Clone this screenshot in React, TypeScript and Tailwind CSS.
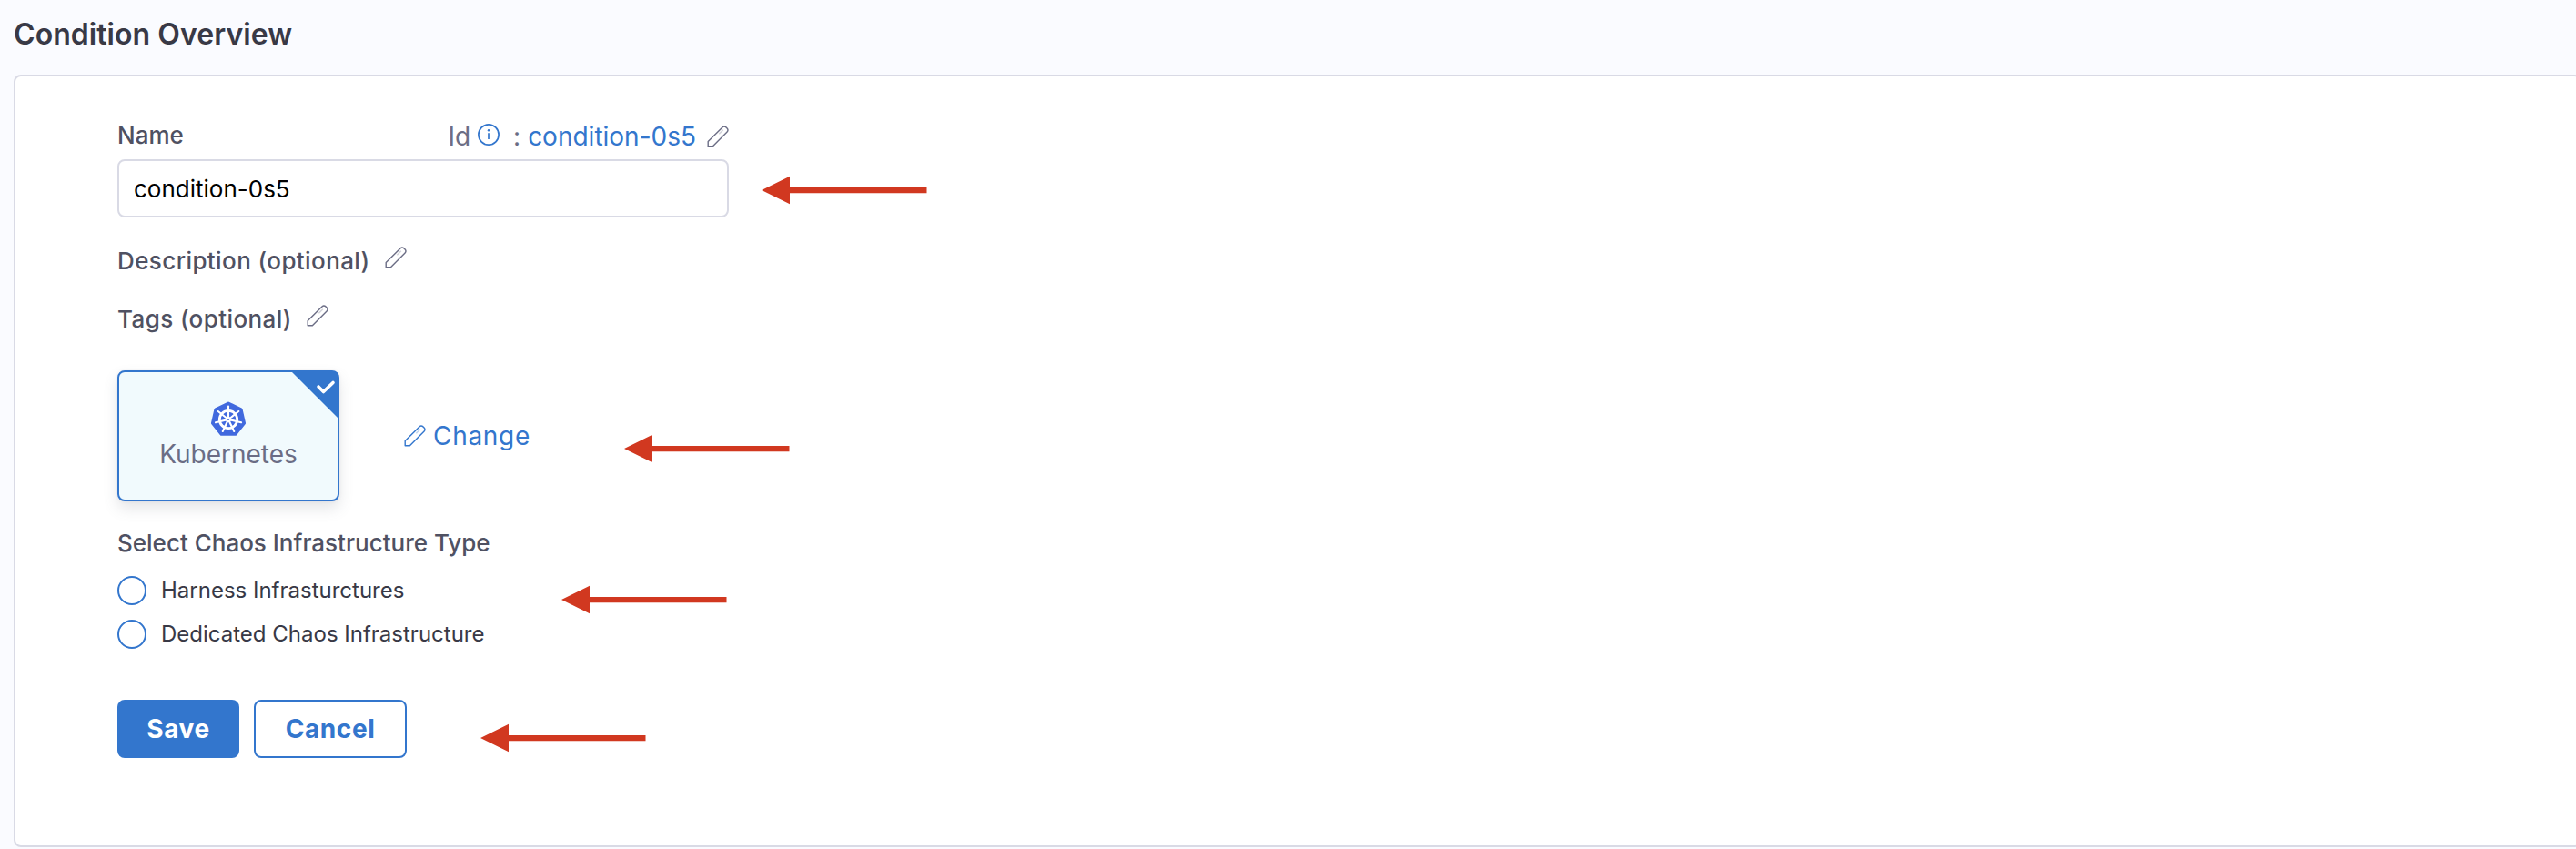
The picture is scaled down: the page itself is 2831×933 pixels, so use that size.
import React from 'react';

function Pencil({ className }: { className: string }) {
  return (
    <svg viewBox="0 0 24 24" fill="none" className={className}>
      <path
        d="M1.2 17.6 16.9 1.9Q18.9 .1 21 1.9L22.1 3Q23.9 5.1 22.1 7.1L6.4 22.8 1.2 22.8Z"
        stroke="currentColor"
        strokeWidth="1.4"
        strokeLinejoin="round"
      />
      <path d="M13.3 9.2 17.8 4.7" stroke="currentColor" strokeOpacity=".3" strokeWidth="1.6" />
    </svg>
  );
}

function Info() {
  return (
    <svg viewBox="0 0 24 24" fill="none" className="h-6 w-6 text-[#3376cd]">
      <circle cx="12" cy="12" r="11.1" stroke="currentColor" strokeWidth="1.7" />
      <path d="M12 10.3V17" stroke="currentColor" strokeWidth="1.7" />
      <circle cx="12" cy="7.3" r="1.2" fill="currentColor" />
    </svg>
  );
}

function point(radius: number, i: number, offset = 0) {
  const a = ((i * 360) / 7 - 90 + offset) * (Math.PI / 180);
  return `${(20 + radius * Math.cos(a)).toFixed(2)} ${(20 + radius * Math.sin(a)).toFixed(2)}`;
}

const seven = [0, 1, 2, 3, 4, 5, 6];

function Kubernetes() {
  return (
    <svg viewBox="0 0 40 40" className="h-10 w-10">
      <path
        d={`M${seven.map((i) => point(18, i)).join('L')}Z`}
        fill="#4169de"
        stroke="#4169de"
        strokeWidth="3"
        strokeLinejoin="round"
      />
      <circle cx="20" cy="20" r="9.7" fill="none" stroke="#fff" strokeWidth="2.8" />
      {seven.map((i) => (
        <path
          key={i}
          d={`M20 20L${point(14.4, i)}`}
          stroke="#fff"
          strokeWidth="2.1"
          strokeLinecap="round"
        />
      ))}
      <circle cx="20" cy="20" r="3" fill="#fff" />
      <circle cx="20" cy="20" r="1.1" fill="#4169de" />
    </svg>
  );
}

function Arrow({ className }: { className: string }) {
  return (
    <svg viewBox="0 0 182 32" className={`absolute h-8 w-[182px] ${className}`}>
      <path d="M0 16 31 .7V13H181.500V19.200H31V31.300Z" fill="#d13820" />
    </svg>
  );
}

function Radio({ label }: { label: string }) {
  return (
    <label className="flex h-8 items-center gap-4">
      <span className="h-8 w-8 shrink-0 rounded-full border-2 border-[#3376cd]" />
      <span className="text-[24px] leading-8 whitespace-nowrap text-[#383946]">{label}</span>
    </label>
  );
}

export default function App() {
  return (
    <div className="relative h-[933px] w-full overflow-hidden bg-[#fafbff] pl-[15px] font-['Inter',sans-serif]">
      <h1 className="flex h-[82px] items-start pt-[18px] text-[32px] leading-10 font-semibold tracking-[0.05px] text-[#383946]">
        <span>Condition Overview</span>
      </h1>
      <main className="h-[849px] w-[2822px] rounded-lg border-2 border-[#d9dae5] bg-white pt-[48px] pl-[112px]">
        <div className="flex h-[43px] w-[672px] items-start justify-between">
          <span className="pt-[1px] text-[26px] leading-8 font-medium text-[#4f5162]">Name</span>
          <div className="flex items-start text-[28px] leading-9 text-[#6b6d85]">
            <span>Id</span>
            <span className="ml-[8px] pt-[4px]"><Info /></span>
            <span className="ml-[15px]">:</span>
            <span className="ml-[8px] text-[#3376cd]">condition-0s5</span>
            <span className="ml-[12px] pt-[6px]"><Pencil className="h-6 w-6" /></span>
          </div>
        </div>
        <div className="flex h-16 w-[672px] items-center rounded-lg border-2 border-[#d9dae5] bg-white pl-[16px] text-[26px] text-black">
          <span>condition-0s5</span>
        </div>
        <div className="mt-[32px] flex h-[32px] items-center text-[26px] leading-8 font-medium tracking-[0.4px] text-[#4f5162]">
          <span>Description (optional)</span>
          <Pencil className="mb-[9px] ml-[17px] h-6 w-6 text-[#6b6d85]" />
        </div>
        <div className="mt-[32px] flex h-[32px] items-center text-[26px] leading-8 font-medium tracking-[0.4px] text-[#4f5162]">
          <span>Tags (optional)</span>
          <Pencil className="mb-[9px] ml-[16px] h-6 w-6 text-[#6b6d85]" />
        </div>
        <div className="mt-[40px] flex h-36 items-center">
          <div className="relative flex h-36 w-[244px] flex-col items-center overflow-visible rounded-lg border-2 border-[#3376cd] bg-[#f1fafd] pt-[32px] text-[28px] leading-9 text-[#6b6d85] shadow-[0_8px_16px_rgba(96,97,112,0.16),0_0_4px_rgba(40,41,61,0.06)]">
            <svg viewBox="0 0 52 52" className="absolute -top-px -right-px h-[52px] w-[52px]">
              <path d="M0 0H46Q52 0 52 6V52Z" fill="#3376cd" />
              <path d="m30 17 5.500 5.500L46 12.500" fill="none" stroke="#fff" strokeWidth="3.600" strokeLinecap="round" strokeLinejoin="round" />
            </svg>
            <Kubernetes />
            <span>Kubernetes</span>
          </div>
          <div className="ml-[71px] flex items-center text-[28px] leading-9 tracking-[0.7px] text-[#3376cd]">
            <Pencil className="h-6 w-6" />
            <span className="ml-[8px]">Change</span>
          </div>
        </div>
        <div className="mt-[30px] text-[26px] leading-8 font-medium text-[#4f5162]">
          <span>Select Chaos Infrastructure Type</span>
        </div>
        <div className="mt-[20px] flex flex-col gap-4">
          <Radio label="Harness Infrasturctures" />
          <Radio label="Dedicated Chaos Infrastructure" />
        </div>
        <div className="mt-[56px] flex gap-4 text-[28px] font-bold tracking-[0.6px]">
          <button className="flex h-16 w-[134px] items-center justify-center rounded-lg bg-[#3376cd] text-white"><span>Save</span></button>
          <button className="flex h-16 w-[168px] items-center justify-center rounded-lg border-2 border-[#3376cd] bg-white text-[#3376cd]"><span>Cancel</span></button>
        </div>
      </main>
      <Arrow className="top-[193px] left-[837px]" />
      <Arrow className="top-[477px] left-[686px]" />
      <Arrow className="top-[643px] left-[617px]" />
      <Arrow className="top-[795px] left-[528px]" />
    </div>
  );
}
